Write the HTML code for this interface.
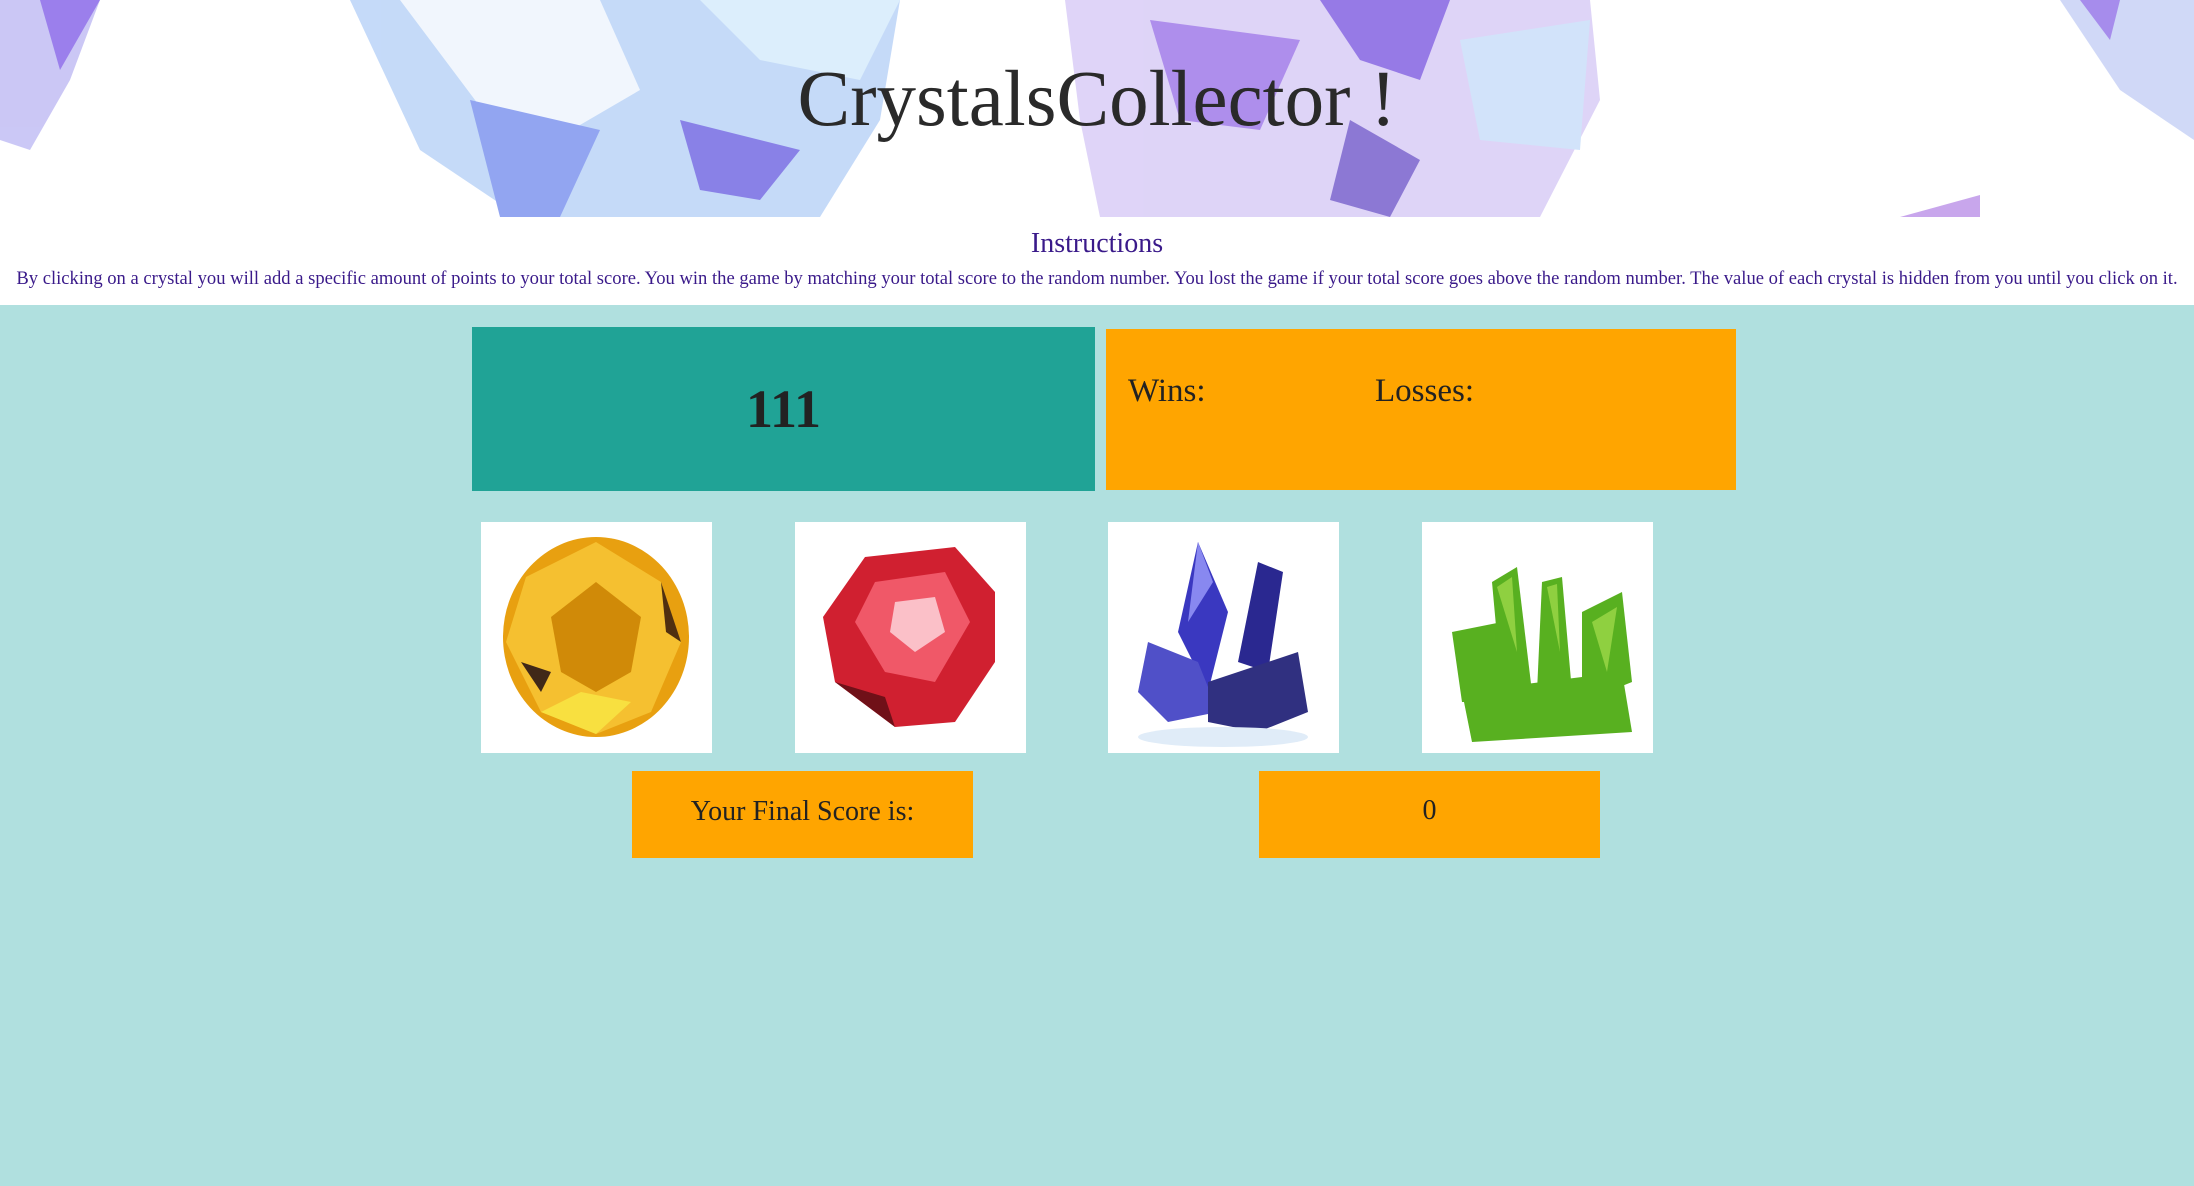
<!DOCTYPE html>
<html><head><meta charset="utf-8"><style>
*{margin:0;padding:0;box-sizing:border-box}
body{width:2194px;height:1186px;background:#b0e0df;font-family:"Liberation Serif",serif;position:relative;overflow:hidden}
#hdr{position:absolute;left:0;top:0;width:2194px;height:217px;background:#fff;overflow:hidden}
#hdr h1{position:absolute;left:0;width:2194px;top:60px;text-align:center;font-weight:normal;font-size:79px;color:#2a2a2a;line-height:1}
#ins{position:absolute;top:217px;left:0;width:2194px;height:88px;background:#fff;color:#3a1a8a;text-align:center}
#ins h3{font-weight:normal;font-size:28px;position:absolute;top:11px;width:100%}
#ins p{font-size:18.6px;position:absolute;top:51px;width:100%;white-space:nowrap}
.box{position:absolute}
.gem{position:absolute;top:522px;width:231px;height:231px;background:#fff}
</style></head><body>
<div id="hdr">
<svg width="2194" height="217" style="position:absolute;left:0;top:0">
<g opacity="0.6">
<polygon points="0,0 100,0 70,80 30,150 0,140" fill="#a9a3f0"/>
<polygon points="40,0 100,0 60,70" fill="#5a2be0"/>
<polygon points="350,0 900,0 880,120 820,217 520,217 420,150" fill="#9fc2f5"/>
<polygon points="400,0 600,0 640,90 520,160 460,80" fill="#e8f1fd"/>
<polygon points="700,0 900,0 860,80 760,60" fill="#c5e4fb"/>
<polygon points="470,100 600,130 560,217 500,217" fill="#4b6be8"/>
<polygon points="680,120 800,150 760,200 700,190" fill="#3b2ed8"/>
<polygon points="1065,0 1590,0 1600,100 1540,217 1100,217 1080,120" fill="#c9b8f3"/>
<polygon points="1150,20 1300,40 1260,130 1180,120" fill="#7a44e0"/>
<polygon points="1320,0 1450,0 1420,80 1360,60" fill="#5222d6"/>
<polygon points="1350,120 1420,160 1390,217 1330,200" fill="#4020b8"/>
<polygon points="1460,40 1590,20 1580,150 1480,140" fill="#b5d2f8"/>
<polygon points="2060,0 2194,0 2194,140 2120,90" fill="#b1bff2"/>
<polygon points="2080,0 2120,0 2110,40" fill="#6c40e0"/>
<polygon points="1900,217 1980,195 1980,217" fill="#a46ae0"/>
</g>
</svg>
<h1>CrystalsCollector !</h1>
</div>
<div id="ins"><h3>Instructions</h3><p>By clicking on a crystal you will add a specific amount of points to your total score. You win the game by matching your total score to the random number. You lost the game if your total score goes above the random number. The value of each crystal is hidden from you until you click on it.</p></div>
<div class="box" style="left:472px;top:327px;width:623px;height:164px;background:#20a396;text-align:center;font-weight:bold;font-size:54px;line-height:164px;color:#222">111</div>
<div class="box" style="left:1106px;top:329px;width:630px;height:161px;background:#ffa500;font-size:33px;color:#222">
<span style="position:absolute;left:22px;top:44px">Wins:</span><span style="position:absolute;left:269px;top:44px">Losses:</span></div>
<div class="gem" style="left:481px"><svg width="231" height="231"><ellipse cx="115" cy="115" rx="93" ry="100" fill="#e8a010"/><polygon points="115,20 180,60 200,120 170,190 115,212 60,190 25,120 45,55" fill="#f5c030"/><polygon points="115,60 160,95 150,150 115,170 80,150 70,95" fill="#d08a08"/><polygon points="60,190 115,212 150,180 100,170" fill="#f8e040"/><polygon points="180,60 200,120 185,110" fill="#503010"/><polygon points="40,140 60,170 70,150" fill="#402818"/></svg></div>
<div class="gem" style="left:795px"><svg width="231" height="231"><polygon points="70,35 160,25 200,70 200,140 160,200 100,205 40,160 28,95" fill="#d02030"/><polygon points="80,60 150,50 175,100 140,160 90,150 60,100" fill="#f05868"/><polygon points="100,80 140,75 150,110 120,130 95,110" fill="#fbc0c8"/><polygon points="40,160 100,205 90,175" fill="#701018"/></svg></div>
<div class="gem" style="left:1108px"><svg width="231" height="231"><polygon points="90,20 120,90 100,170 70,110" fill="#3a38c0"/><polygon points="150,40 175,50 160,150 130,140" fill="#2a2890"/><polygon points="40,120 90,140 110,190 60,200 30,170" fill="#5050c8"/><polygon points="100,160 190,130 200,190 150,210 100,200" fill="#303080"/><polygon points="90,20 105,60 80,100" fill="#8888f0"/><ellipse cx="115" cy="215" rx="85" ry="10" fill="#e0ecf8"/></svg></div>
<div class="gem" style="left:1422px"><svg width="231" height="231"><g fill="#58b020"><polygon points="30,110 80,100 100,180 40,180"/><polygon points="70,60 95,45 110,170 80,170"/><polygon points="120,60 140,55 150,170 115,170"/><polygon points="160,90 200,70 210,160 160,180"/><polygon points="40,170 200,150 210,210 50,220"/></g><g fill="#8fd040"><polygon points="75,65 90,55 95,130"/><polygon points="125,65 135,62 138,130"/><polygon points="170,100 195,85 185,150"/></g></svg></div>
<div class="box" style="left:632px;top:771px;width:341px;height:87px;background:#ffa500;text-align:center;font-size:28px;line-height:82px;color:#222">Your Final Score is:</div>
<div class="box" style="left:1259px;top:771px;width:341px;height:87px;background:#ffa500;text-align:center;font-size:28px;line-height:80px;color:#222">0</div>
</body></html>
